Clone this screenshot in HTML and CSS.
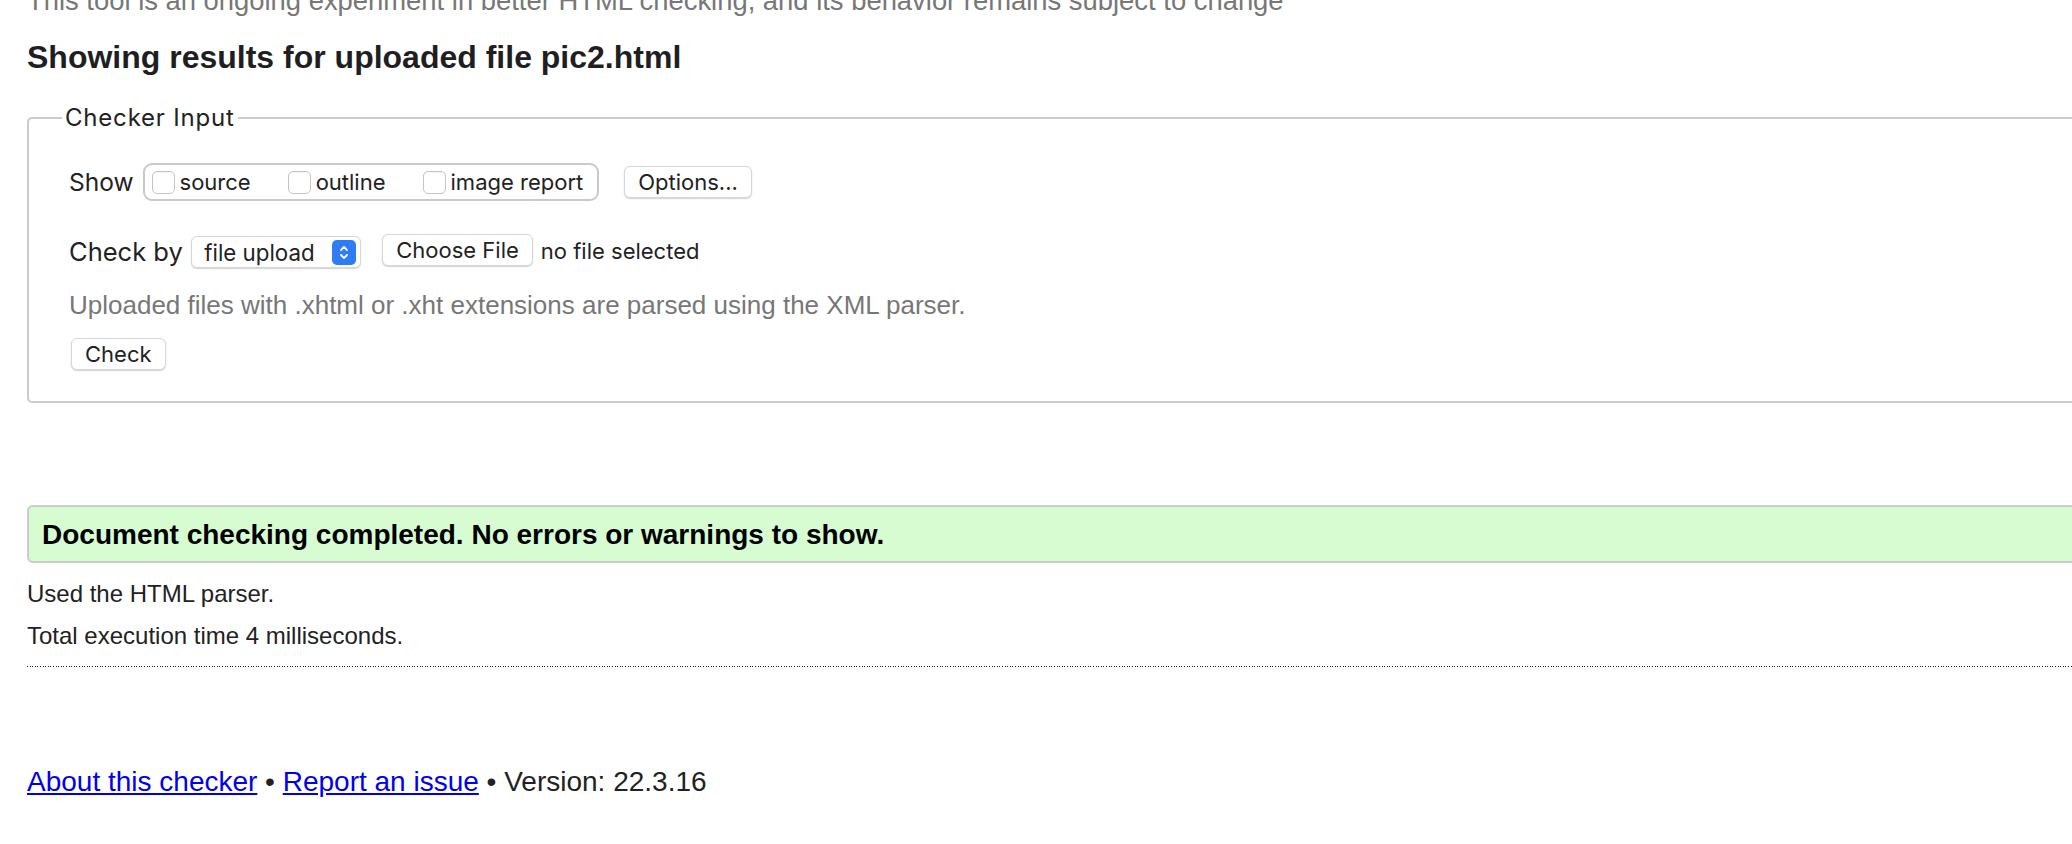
FILE: index.html
```html
<!DOCTYPE html>
<html lang="en">
<head>
<meta charset="utf-8">
<title>Showing results for uploaded file pic2.html</title>
<link rel="stylesheet" href="styles.css">
</head>
<body>
<div class="page">
  <p class="intro">This tool is an ongoing experiment in better HTML checking, and its behavior remains subject to change</p>
  <h2 class="results-title">Showing results for uploaded file pic2.html</h2>
  <fieldset class="checker">
    <legend class="checker-legend">Checker Input</legend>
    <div class="checker-body">
      <div class="row row-show">
        <span class="row-label">Show</span>
        <div class="show-group">
          <label class="opt"><span class="box"></span><span class="opt-text">source</span></label>
          <label class="opt"><span class="box"></span><span class="opt-text">outline</span></label>
          <label class="opt"><span class="box"></span><span class="opt-text">image report</span></label>
        </div>
        <button class="btn btn-options" type="button">Options...</button>
      </div>
      <div class="row row-check">
        <span class="row-label">Check by</span>
        <span class="select">
          <span class="select-text">file upload</span>
          <span class="stepper">
            <svg width="24" height="25" viewBox="0 0 24 25" aria-hidden="true">
              <rect x="0" y="0" width="24" height="25" rx="5" fill="#2f7cf6"/>
              <path d="M9 10 L12 7 L15 10" fill="none" stroke="#fff" stroke-width="1.8" stroke-linecap="round" stroke-linejoin="round"/>
              <path d="M9 15 L12 18 L15 15" fill="none" stroke="#fff" stroke-width="1.8" stroke-linecap="round" stroke-linejoin="round"/>
            </svg>
          </span>
        </span>
        <button class="btn btn-file" type="button">Choose File</button>
        <span class="file-status">no file selected</span>
      </div>
      <p class="note">Uploaded files with .xhtml or .xht extensions are parsed using the XML parser.</p>
      <button class="btn btn-check" type="button">Check</button>
    </div>
  </fieldset>
  <div class="success">
    <p class="success-text">Document checking completed. No errors or warnings to show.</p>
  </div>
  <p class="info info-first">Used the HTML parser.</p>
  <p class="info info-second">Total execution time 4 milliseconds.</p>
  <div class="divider"></div>
  <p class="footer"><a class="footer-link" href="#">About this checker</a> • <a class="footer-link" href="#">Report an issue</a> • Version: 22.3.16</p>
</div>
</body>
</html>
```

FILE: styles.css
```css
html {
  overflow: hidden;
  background: #fff;
}

body {
  margin: 0;
  font-family: "Liberation Sans", Arial, Helvetica, sans-serif;
  color: #222;
}

.page {
  width: 2120px;
  padding-left: 27px;
}

.intro {
  margin: -14px 0 0 0;
  font-size: 27.4px;
  line-height: 30px;
  color: #777;
  white-space: nowrap;
}

.results-title {
  margin: 23px 0 0 0;
  font-size: 32px;
  line-height: 36px;
  font-weight: bold;
  color: #1f1f23;
}

.checker {
  margin: 30px 0 0 0;
  padding: 0;
  border: 2px solid #cbcbcb;
  border-radius: 5px;
  min-width: 0;
}

.checker-legend {
  margin-left: 33px;
  padding: 0 3px;
  font-family: Inter, "Noto Sans", sans-serif;
  font-size: 24px;
  letter-spacing: 0.8px;
  line-height: 26px;
  color: #222;
}

.checker-body {
  padding: 32px 0 31px 40px;
  font-family: Inter, "Noto Sans", sans-serif;
  color: #222;
}

.row {
  display: flex;
  align-items: center;
}

.row-label {
  font-size: 24.5px;
}

.row-show {
  height: 38px;
}

.row-show .row-label {
  margin-right: 9px;
}

.show-group {
  display: flex;
  align-items: center;
  height: 38px;
  box-sizing: border-box;
  border: 2px solid #c9c9c9;
  border-radius: 9px;
  padding: 0 14px 0 7px;
  gap: 37px;
}

.opt {
  display: flex;
  align-items: center;
  gap: 5px;
  font-size: 22px;
}

.box {
  width: 23px;
  height: 23px;
  box-sizing: border-box;
  border: 1px solid #c4c4c4;
  border-radius: 5px;
  background: #fff;
  box-shadow: inset 0 1px 1px rgba(0, 0, 0, 0.04);
}

.btn {
  appearance: none;
  margin: 0;
  height: 32px;
  box-sizing: border-box;
  border: 1px solid #d6d6d6;
  border-radius: 6px;
  background: #fff;
  box-shadow: 0 1px 1.5px rgba(0, 0, 0, 0.18);
  font-family: Inter, "Noto Sans", sans-serif;
  font-size: 22px;
  color: #222;
  padding: 0 13px;
  line-height: 30px;
}

.btn-options {
  margin-left: 25px;
}

.row-check {
  margin-top: 33px;
  height: 34px;
}

.row-check .row-label {
  font-size: 25.5px;
  margin-right: 8.5px;
}

.select {
  display: flex;
  align-items: center;
  justify-content: space-between;
  width: 170px;
  height: 32px;
  box-sizing: border-box;
  border: 1px solid #d6d6d6;
  border-radius: 6px;
  background: #fff;
  box-shadow: 0 1px 1.5px rgba(0, 0, 0, 0.18);
  padding: 0 4px 0 12px;
  font-size: 22.3px;
  margin-top: 2px;
}

.stepper {
  display: flex;
  width: 24px;
  height: 25px;
}

.btn-file {
  margin-left: 21px;
  margin-top: -2px;
}

.file-status {
  margin-left: 8px;
  font-size: 22px;
}

.note {
  margin: 22px 0 0 0;
  font-family: "Liberation Sans", Arial, Helvetica, sans-serif;
  font-size: 26px;
  line-height: 30px;
  color: #777;
}

.btn-check {
  display: block;
  margin-top: 18px;
  margin-left: 2px;
}

.success {
  margin-top: 102px;
  border: 2px solid #cbcbcb;
  border-radius: 6px;
  background: #d7fcd2;
  padding: 12px 12px 10px 13px;
}

.success-text {
  margin: 0;
  font-size: 28px;
  line-height: 32px;
  font-weight: bold;
  color: #000;
}

.info {
  margin: 0;
  font-size: 24px;
  line-height: 28px;
  color: #222;
}

.info-first {
  margin-top: 17px;
}

.info-second {
  margin-top: 14px;
}

.divider {
  margin-top: 16px;
  height: 1px;
  background-image: repeating-linear-gradient(to right, #222 0 1px, transparent 1px 2.6px);
}

.footer {
  margin: 99px 0 0 0;
  font-size: 28px;
  line-height: 32px;
  color: #222;
}

.footer-link {
  color: #0000ee;
  text-decoration: underline;
}
```
